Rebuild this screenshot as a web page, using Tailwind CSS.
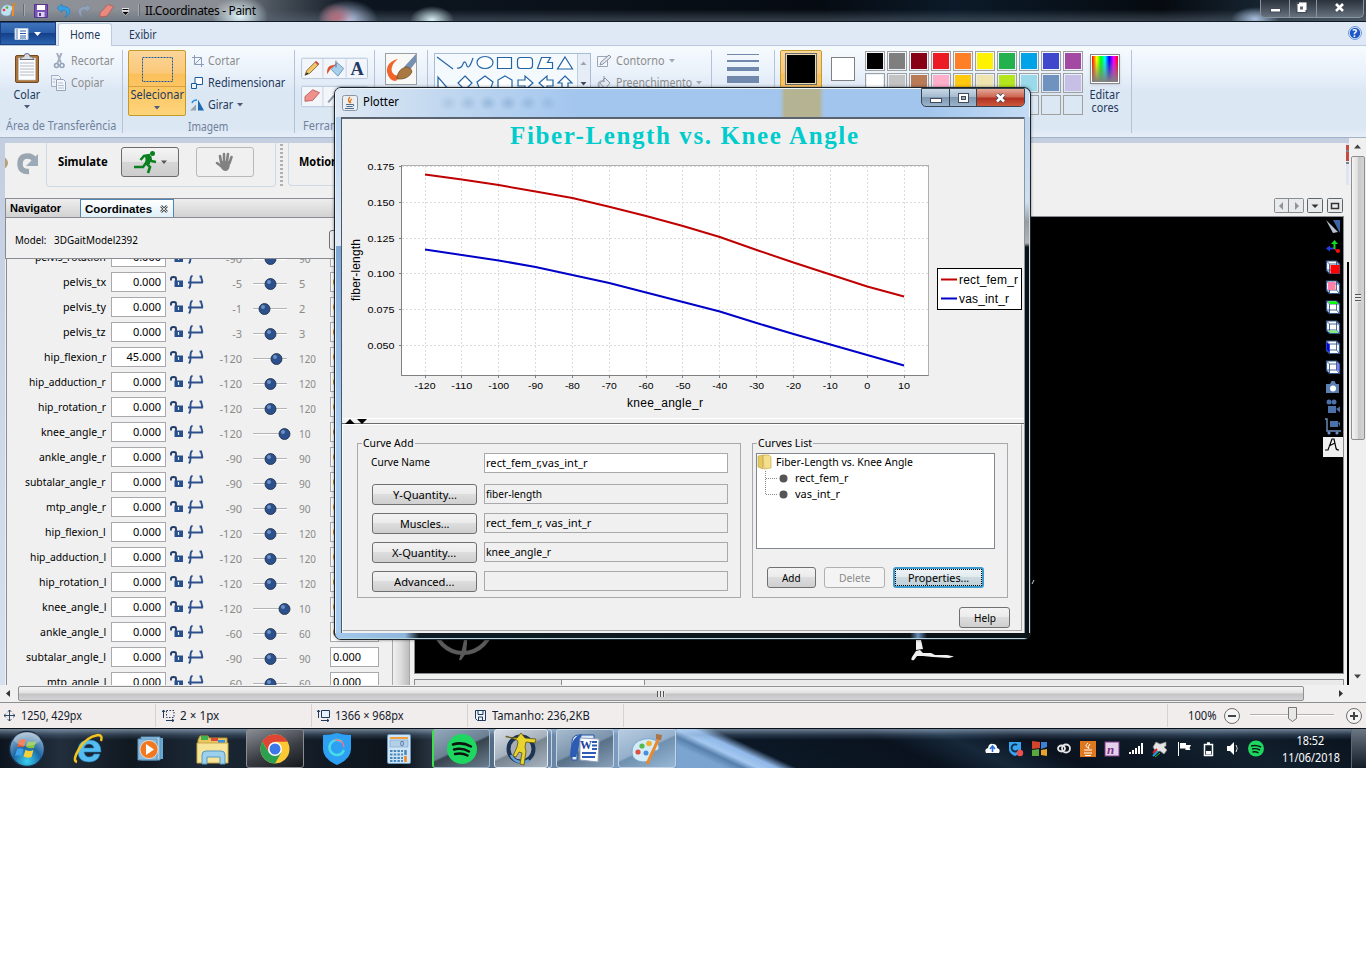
<!DOCTYPE html>
<html lang="pt">
<head>
<meta charset="utf-8">
<title>II.Coordinates - Paint</title>
<script src="https://cdn.jsdelivr.net/npm/@tailwindcss/browser@4"></script>
</head>
<body class="bg-white overflow-hidden font-['Noto_Sans','Open_Sans',sans-serif] text-[11px] leading-[14px] text-black">
<main class="relative w-[1366px] h-[968px] flex flex-col bg-white whitespace-nowrap overflow-hidden">

<!-- Title bar -->
<header class="h-[22px] shrink-0 flex items-start border-b border-[#101820] bg-[radial-gradient(ellipse_28px_20px_at_240px_16px,#dff3f8,transparent),radial-gradient(ellipse_18px_14px_at_336px_17px,#b46a78,transparent),radial-gradient(ellipse_30px_20px_at_348px_20px,#b8c8e8,transparent),radial-gradient(ellipse_22px_14px_at_432px_20px,#d8f0f4,transparent),radial-gradient(ellipse_24px_12px_at_1255px_19px,#a8c0dc,transparent),linear-gradient(180deg,transparent_45%,rgba(90,104,118,.5)_95%),linear-gradient(90deg,#8f9298_0%,#8a8d93_16%,#4a525c_20%,#0d1620_26%,#060b12_60%,#0b1a28_70%,#060a10_85%,#1a2a38_94%,#3a4450_100%)]">
  <svg class="w-[430px] h-[21px]" viewBox="0 0 430 21">
    <g><path d="M1 10q2-6 8-5q5 1 4 5q-2 0-2 2q0 4-4 4q-7 0-6-6z" fill="#bfe2f2" stroke="#6e9fbe" stroke-width=".6"/><circle cx="4" cy="10" r="1.3" fill="#e84030"/><circle cx="7" cy="7.500" r="1.300" fill="#5fae3a"/><path d="M13 4v12" stroke="#f08a28" stroke-width="2"/><path d="M12 3h4v3h-4z" fill="#b98b4c"/></g>
    <path d="M23.500 4v12M139.500 4v12" stroke="#686c74"/><path d="M138.500 4v12M24.500 4v12" stroke="#b8bcc4" stroke-width=".6"/>
    <path d="M34.500 4.500h13v13h-13z" fill="#7a55b8" stroke="#54348c"/><path d="M37 5h8v5h-8z" fill="#fff"/><path d="M37.500 12h7v5h-7z" fill="#dcd4ec"/><path d="M39 13h2v3h-2z" fill="#54348c"/>
    <path d="M57 8l5-4v2.500q8-.5 8 5q0 3.500-5 6q2.500-4 1.500-6t-4.500-1.500v2.500z" fill="#38a0e4" stroke="#1c78bc" stroke-width=".6"/>
    <path d="M91 8l-5-4v2.500q-8-.5-8 5q0 3.500 5 6q-2.500-4-1.500-6t4.500-1.500v2.500z" fill="#92a0b4" stroke="#7686a0" stroke-width=".6"/>
    <path d="M100 13l8-8.500l5.500 2l-6.500 9.500l-7 1z" fill="#e88a80" stroke="#b85048" stroke-width=".7"/>
    <path d="M122 9.500h7" stroke="#fff" stroke-width="2.500"/><path d="M121.500 11.500h8l-4 4z" fill="#fff"/><path d="M122.500 9.500h6" stroke="#000"/><path d="M122.500 12h6l-3 3z" fill="#000"/>
    <text x="145" y="15" font-size="12" textLength="111" lengthAdjust="spacing">II.Coordinates - Paint</text>
  </svg>
  <div class="ml-auto mr-[2px] w-[104px] h-[18px] border border-t-0 border-[#8a949e] rounded-b-[5px] bg-linear-to-b from-[#2a323c] to-[#66727e] flex">
    <svg viewBox="0 0 101 17" class="w-[101px] h-[17px]"><path d="M28.500 0v17M55.500 0v17" stroke="#8a949e"/><rect x="9.500" y="8.500" width="10" height="3.500" fill="#fff" stroke="#444a58"/><path d="M36.500 3.500h8v8h-8z" fill="none" stroke="#444a58" stroke-width="3"/><path d="M38 2.500h7.500v7.500h-1v2h-8v-8h1.500z" fill="#fff"/><path d="M39 6.500h3v3h-3z" fill="#667"/><path d="M75 4l7 7M82 4l-7 7" stroke="#444a58" stroke-width="4.500"/><path d="M75 4l7 7M82 4l-7 7" stroke="#fff" stroke-width="2.600"/></svg>
  </div>
</header>

<!-- Ribbon tabs -->
<nav class="h-[24px] shrink-0 bg-[#dfe9f5] border-b border-[#b9c8da] flex text-[#1e395b] text-[12px]">
  <div class="w-[56px] h-[23px] border border-[#1b3f7c] bg-[linear-gradient(180deg,#3f74bc,#2a5ca8_48%,#16408a_50%,#2a64b0)] flex items-center justify-center">
    <svg viewBox="0 0 30 14" class="w-[30px] h-[14px]"><path d="M2 1.500h13v11h-13z" fill="#fff" stroke="#b8cce8"/><path d="M7 4h6M7 6.500h6M7 9h6M7 11h6" stroke="#2a5ca8"/><path d="M4 2v10" stroke="#a8bcd8" stroke-width="2"/><path d="M21 5h7l-3.500 4z" fill="#fff"/></svg>
  </div>
  <div class="ml-[2px] mt-px w-[54px] h-[23px] bg-[#f8fbfe] border border-b-0 border-[#bccbdd] rounded-t-[3px] text-center leading-[22px]"><span data-w="30">Home</span></div>
  <div class="ml-[17px] leading-[25px]"><span data-w="28">Exibir</span></div>
  <svg viewBox="0 0 14 14" class="ml-auto mr-[4px] mt-[4px] w-[14px] h-[14px]"><circle cx="7" cy="7" r="6.500" fill="#dfe9f5" stroke="#6d9ad8"/><circle cx="7" cy="7" r="5.200" fill="#1e56c8"/><text x="4.300" y="10.800" font-size="10" font-weight="bold" fill="#fff">?</text></svg>
</nav>

<!-- Ribbon -->
<section class="h-[92px] shrink-0 flex bg-[linear-gradient(180deg,#f7fbfe,#e9f1fa_30%,#dce7f4_50%,#dce7f4_90%,#e6eef8)] border-b border-[#a3b2c6] text-[#1e395b] text-[12px]">
  <div class="w-[123px] pt-[6px] flex flex-col border-r border-[#b4c3d8] my-[4px]">
    <div class="flex h-[67px] -mt-[6px]">
      <div class="w-[53px] flex flex-col items-center">
        <svg viewBox="0 0 28 34" class="w-[28px] h-[34px]"><rect x="2.500" y="5.500" width="23" height="27" rx="1.500" fill="#a8743c" stroke="#74481c"/><path d="M5.500 8h17v22h-17z" fill="#fbfcfe" stroke="#c8c8c8" stroke-width=".6"/><path d="M7 13h14M7 16h14M7 19h14M7 22h14M7 25h14" stroke="#b4bac4"/><path d="M7 9.500q1-3 4-3q0-3 3-3t3 3q3 0 4 3z" fill="#d8dce0" stroke="#6a6e74"/></svg>
        <span class="mt-[4px]" data-w="27">Colar</span>
        <svg viewBox="0 0 6 4" class="w-[6px] h-[4px] mt-[3px]"><path d="M0 0h6l-3 3.500z" fill="#4a5a78"/></svg>
      </div>
      <div class="flex flex-col text-[#8d8d8d]">
        <div class="flex h-[22px] items-center gap-[4px]"><svg viewBox="0 0 14 16" class="w-[14px] h-[16px]"><path d="M4 0l4 10M8.500 0l-4 10" stroke="#a4aec0" stroke-width="2" fill="none"/><circle cx="3.500" cy="12.500" r="2" fill="none" stroke="#94a0b6" stroke-width="1.600"/><circle cx="9" cy="12.500" r="2" fill="none" stroke="#94a0b6" stroke-width="1.600"/></svg><span data-w="43">Recortar</span></div>
        <div class="flex h-[22px] items-center gap-[4px] -ml-[2px]"><svg viewBox="0 0 16 16" class="w-[16px] h-[16px]"><path d="M.5.5h7l2 2v9h-9z" fill="#eef2f8" stroke="#a0aec4"/><path d="M5.500 4.500h7l2 2v9h-9z" fill="#f4f7fb" stroke="#94a2ba"/><path d="M7 8h5M7 10.500h6M7 13h6M2 4h3M2 7h2" stroke="#b0bccf"/></svg><span data-w="33">Copiar</span></div>
      </div>
    </div>
    <div class="pl-[6px] text-[#70819c] mt-[5px]"><span data-w="110">Área de Transferência</span></div>
  </div>
  <div class="w-[172px] flex flex-col border-r border-[#b4c3d8] my-[4px]">
    <div class="flex h-[67px]">
      <div class="ml-[5px] w-[58px] h-[66px] border border-[#c29b29] rounded-[2px] bg-[linear-gradient(180deg,#fbd59a,#fbc878_35%,#fbbf5a_36%,#fcc765_60%,#fdd47a)] flex flex-col items-center">
        <svg viewBox="0 0 56 36" class="w-[56px] h-[36px] shrink-0"><rect x="13.500" y="6.500" width="30" height="24" fill="none" stroke="#1c5aa0" stroke-dasharray="2 1"/><path d="M0 35.500h56" stroke="#d8a040"/></svg>
        <span class="mt-[1px]" data-w="53">Selecionar</span>
        <svg viewBox="0 0 6 4" class="w-[6px] h-[4px] mt-[4px]"><path d="M0 0h6l-3 3.500z" fill="#4a5a78"/></svg>
      </div>
      <div class="ml-[5px] flex flex-col">
        <div class="flex h-[22px] items-center gap-[4px] text-[#8d8d8d]"><svg viewBox="0 0 12 12" class="w-[12px] h-[12px] ml-px"><path d="M2.500 0v9.500h9.500M0 2.500h9.500v9.500M2.500 9.500l7-7" fill="none" stroke="#8c9cb8"/></svg><span data-w="32">Cortar</span></div>
        <div class="flex h-[22px] items-center gap-[5px]"><svg viewBox="0 0 12 12" class="w-[12px] h-[12px]"><path d="M4 .5h7.500v7h-7.500z" fill="#fff" stroke="#1c5a98"/><path d="M.5 6.500h5v5h-5z" fill="#e8f4fc" stroke="#1c5a98"/></svg><span data-w="77">Redimensionar</span></div>
        <div class="flex h-[22px] items-center gap-[4px]"><svg viewBox="0 0 14 12" class="w-[14px] h-[12px] -ml-px"><path d="M0 11.500h6v-6z" fill="#98a4ac"/><path d="M8 11.500h6l-6-11z" fill="#1c6cb4"/><path d="M2 4q1-3 5-3" stroke="#2a8ad8" fill="none" stroke-width="1.500"/></svg><span data-w="25">Girar</span><svg viewBox="0 0 6 4" class="w-[6px] h-[4px]"><path d="M0 0h6l-3 3.500z" fill="#4a5a78"/></svg></div>
      </div>
    </div>
    <div class="pl-[65px] text-[#70819c] mt-[4px]"><span data-w="40">Imagem</span></div>
  </div>
  <div class="w-[80px] flex flex-col border-r border-[#b4c3d8] my-[4px] pl-[5px]">
    <svg viewBox="300 50 70 64" class="w-[70px] h-[64px]"><g fill="#f2f6fb" stroke="#b4c4da"><rect x="300.500" y="58.500" width="68" height="21" rx="1"/><rect x="300.500" y="87.500" width="68" height="21" rx="1"/></g><path d="M322.500 59v20M346.500 59v20M322.500 88v20" stroke="#c8d4e4"/><path d="M304 76l2-5l9-9l3 3l-9 9z" fill="#f4c860" stroke="#6a5030" stroke-width=".8"/><path d="M315 62l3 3" stroke="#c84c4c" stroke-width="2"/><path d="M304 76l2-3l1.500 1.500z" fill="#222"/><path d="M331 70l6-7l7 6l-6 8z" fill="#a8d0ec" stroke="#5a88b0" stroke-width=".8"/><path d="M327 75q-1-8 4-9l5-1l-4 3q-2 1-5 7z" fill="#e04c28"/><path d="M336 61v7" stroke="#667"/><text x="351" y="76" font-size="19" font-weight="bold" font-family="Liberation Serif,serif" fill="#1e3a66">A</text><path d="M304 98l8-7l7 3l-7 8l-8 1z" fill="#f0908a" stroke="#b05048" stroke-width=".8"/><path d="M328 104l6-7" stroke="#8898a8" stroke-width="2"/></svg>
    <div class="text-[#70819c] pl-[3px] mt-[7px]"><span data-w="66">Ferramentas</span></div>
  </div>
  <div class="w-[53px] border-r border-[#b4c3d8] my-[4px] pl-[10px]">
    <svg viewBox="0 0 32 38" class="w-[32px] h-[38px] mt-[2px]"><rect x=".5" y="1.500" width="31" height="31" fill="#f8f8f6" stroke="#98a0a8"/><path d="M13 7q-12 3-11 13q2 9 9 9l4-6q-5 2-8-3q-2-7 6-13z" fill="#f06428"/><path d="M31 2l-12 13l5 4l7-9z" fill="#7890b0"/><path d="M12 26q1-9 9-11q5 0 6 5q-4 8-15 7z" fill="#a87840" stroke="#6a4820" stroke-width=".7"/></svg>
  </div>
  <div class="w-[284px] border-r border-[#b4c3d8] my-[4px] pl-[6px] flex">
    <svg viewBox="434 52 157 64" class="w-[157px] h-[64px] mt-[2px]"><rect x="434.500" y="53.500" width="156" height="62" fill="#f4f9fd" stroke="#a8bcd6"/><path d="M577.500 54v62" stroke="#c0cede"/><path d="M578 54h12v62h-12z" fill="#e6edf6"/><path d="M580.500 65h6l-3-3.500z" fill="#98a4b4"/><path d="M580.500 82h6l-3 3.500z" fill="#3a4a68"/><g fill="#fff" stroke="#2464a4" stroke-width="1.200"><path d="M437 57l16 12" fill="none"/><path d="M457 68q4 1 6-4t4 2q2 4 6-8" fill="none"/><ellipse cx="485" cy="62.500" rx="8" ry="6"/><path d="M497.500 57.500h14v11h-14z"/><rect x="517.500" y="57.500" width="15" height="11" rx="3"/><path d="M541.500 57.500h9l-3 5h5v6h-15z"/><path d="M565 57l7.500 12h-15z"/><path d="M438 77v14h12z"/><path d="M485 76l7 7l-7 7l-7-7z" transform="translate(-20 0)"/><path d="M485 76l8 6l-3 8h-10l-3-8z"/><path d="M505 76l7 4v9h-14v-9z"/><path d="M518 80h7v-4l8 7l-8 7v-4h-7z"/><path d="M553 80h-6v-4l-8 7l8 7v-4h6z"/><path d="M565 76l7 7h-4v8h-6v-8h-4z"/></g></svg>
    <div class="ml-[6px] flex flex-col text-[#8d8d8d]">
      <div class="flex h-[22px] items-center gap-[4px]"><svg viewBox="0 0 15 14" class="w-[15px] h-[14px]"><path d="M.5 2.500h10v10h-10z" fill="#f4f6fa" stroke="#9aa6b8"/><path d="M3 11l1-3l8-7l2 2l-8 7z" fill="#e4e8ee" stroke="#8a94a6"/></svg><span data-w="49">Contorno</span><svg viewBox="0 0 6 4" class="w-[6px] h-[4px]"><path d="M0 0h6l-3 3.500z" fill="#a0a8b4"/></svg></div>
      <div class="flex h-[22px] items-center gap-[4px]"><svg viewBox="0 0 15 14" class="w-[15px] h-[14px]"><path d="M3 7l5-5l5 5l-5 6z" fill="#e4e8ee" stroke="#8a94a6"/><path d="M2 11q-2-6 5-6" fill="none" stroke="#a8b0be" stroke-width="2"/><path d="M7 0v6" stroke="#8a94a6"/></svg><span data-w="76">Preenchimento</span><svg viewBox="0 0 6 4" class="w-[6px] h-[4px]"><path d="M0 0h6l-3 3.500z" fill="#a0a8b4"/></svg></div>
    </div>
  </div>
  <div class="w-[63px] border-r border-[#b4c3d8] my-[4px] pl-[15px]">
    <div class="w-[32px] flex flex-col gap-[5px] pt-[4px]"><div class="h-px bg-[#7088ac]"></div><div class="h-[2px] bg-[#7088ac]"></div><div class="h-[4px] bg-[#7088ac]"></div><div class="h-[7px] bg-[#7088ac]"></div></div>
  </div>
  <div class="w-[357px] border-r border-[#b4c3d8] my-[4px] flex pl-[5px]">
    <div class="w-[42px] h-[66px] border border-[#c29b29] rounded-[2px] bg-[linear-gradient(180deg,#fbd59a,#fbc878_35%,#fbbf5a_36%,#fdd47a)] flex justify-center pt-[2px]"><div class="w-[32px] h-[32px] border border-[#6a6a6a] bg-[#e8d8b0] p-px"><div class="bg-black size-full"></div></div></div>
    <div class="ml-[9px] mt-[7px] w-[24px] h-[24px] border border-[#808080] bg-white"></div>
    <div id="palette" class="ml-[10px] mt-[1px] grid grid-cols-[repeat(10,20px)] gap-[2px] content-start"></div>
    <div class="ml-[5px] flex flex-col items-center w-[34px] text-center">
      <div class="mt-[4px] w-[30px] h-[30px] border border-[#888] bg-white p-[1px] shadow"><div class="size-full bg-[linear-gradient(0deg,#808080,transparent_85%),linear-gradient(90deg,#f00,#ff0_18%,#0f0_34%,#0ff_50%,#00f_66%,#f0f_84%,#f00)]"></div></div>
      <span class="mt-[4px] leading-[13px]" data-w="30">Editar</span><span class="leading-[13px]" data-w="27">cores</span>
    </div>
  </div>
</section>

<!-- Canvas area -->
<section class="h-[547px] shrink-0 flex">
  <div class="w-[1349px] flex bg-[linear-gradient(180deg,#c3cfe1,#d6e0ef)]">
    <div class="mt-[5px] ml-[5px] w-[1344px] bg-[#f0f0f0] flex flex-col overflow-hidden">
      <!-- Simulate toolbar -->
      <div class="h-[55px] shrink-0 flex">
        <svg viewBox="5 143 41 55" class="w-[41px] h-[55px]"><circle cx="2" cy="163" r="6" fill="#b8a078"/><path d="M29 171.500q-9 .5-9-7.500q0-8 7.500-8q5 0 7 4" fill="none" stroke="#9aa6b2" stroke-width="5.500"/><path d="M38 154v12h-12z" fill="#9aaab8"/></svg>
        <div class="w-[230px] h-[44px] border border-t-0 border-[#cdd9e4] rounded-b-[4px] flex items-start pl-[11px] font-bold">
          <span class="mt-[12px] text-[11.5px]" data-w="50">Simulate</span>
          <div class="ml-[13px] mt-[4px] w-[58px] h-[30px] border border-[#6c6c6c] rounded-[3px] bg-[linear-gradient(180deg,#f4f4f4,#e8e8e8_48%,#d6d6d6_50%,#cdcdcd)] flex items-center justify-center">
            <svg viewBox="0 0 36 24" class="w-[36px] h-[24px]"><circle cx="20.500" cy="3.500" r="2.500" fill="#0a8020"/><path d="M18 5l-6 1l-3.500 4M17 6l-3 7l4 4l-2 6M14 13l-3 4h-9M18 6l1 5l5 1" fill="none" stroke="#0a8020" stroke-width="2.600"/><path d="M13 5l6 1l-1 8l-4 1z" fill="#0a8020"/><path d="M29 10.500h6l-3 3.500z" fill="#555"/></svg>
          </div>
          <div class="ml-[17px] mt-[4px] w-[58px] h-[30px] border border-[#b8b8b8] rounded-[3px] flex items-center justify-center"><svg viewBox="0 0 20 20" class="w-[20px] h-[20px]"><g stroke="#828282" stroke-width="2.600" stroke-linecap="round" fill="none"><path d="M6 10l-1-6M9 9v-7M12 9l1-7M14.500 11l2-6M6 14l-4-3"/></g><path d="M5 9h10.500l-1 6q-1 4-4 4t-5-4z" fill="#828282"/></svg></div>
        </div>
        <div class="ml-[4px] mt-[1px] h-[42px] w-[3px] bg-[repeating-linear-gradient(180deg,#b0b0b0_0_2px,transparent_2px_4px)]"></div>
        <div class="ml-[5px] w-[400px] h-[43px] border border-t-0 border-[#cdd9e4] rounded-b-[4px] pl-[10px] pt-[12px] font-bold text-[11.5px]"><span data-w="42">Motion:</span></div>
        <svg viewBox="0 0 3 42" class="ml-auto w-[3px] h-[42px]"><path d="M0 0h3v42h-3z" fill="#dce4f2"/><path d="M0 2h3v5h-3zM0 9h3v9h-3z" fill="#c44c40"/><path d="M0 8h3M0 20h3" stroke="#222"/></svg>
      </div>
      <div class="flex h-[487px] shrink-0">
        <!-- Coordinates panel -->
        <div class="w-[406px] flex flex-col">
          <div class="h-[20px] shrink-0 flex border-y border-[#8a8c94] border-l bg-[linear-gradient(180deg,#eee,#d2d2d2)] font-['Liberation_Sans',Arial,sans-serif] font-bold text-[11.5px] leading-[19px]">
            <div class="w-[74px] pl-[4px]"><span data-w="51">Navigator</span></div>
            <div class="w-[94px] pl-[4px] border border-b-0 border-[#4a86b8] bg-linear-to-b from-white to-[#e0f0f8] flex items-center leading-[18px]"><span data-w="67">Coordinates</span><svg viewBox="0 0 8 8" class="ml-[8px] w-[8px] h-[8px]"><path d="M1 1l6 6M7 1l-6 6" stroke="#555" stroke-width="2.600"/><path d="M1 1l6 6M7 1l-6 6" stroke="#fff" stroke-width=".8"/></svg></div>
          </div>
          <div class="h-[41px] shrink-0 border-l border-b border-[#8a8c94] flex items-center pl-[9px] pt-[4px]"><span data-w="31">Model:</span><span class="ml-[8px]" data-w="84">3DGaitModel2392</span><div class="ml-[191px] w-[30px] h-[20px] border border-[#707070] rounded-[3px]"></div></div>
          <div class="h-[426px] ml-px flex border-l border-[#8a8c94] overflow-hidden">
            <div id="rows" class="w-[385px] -mt-[14px]"></div>
            <div class="w-[18px] border-x border-[#a8a8a8] bg-[linear-gradient(90deg,#f0f0f0,#dcdcdc_50%,#bcbcbc)]"></div>
          </div>
        </div>
        <!-- 3D view -->
        <div class="ml-[3px] w-[930px] flex flex-col">
          <div class="h-[17px] shrink-0 flex justify-end">
            <svg viewBox="1274 197 70 17" class="w-[70px] h-[17px]"><g fill="#e8eaec" stroke="#5e666c"><rect x="1274.500" y="197.500" width="29" height="14" rx="1" stroke="#888c90"/><rect x="1307.500" y="197.500" width="15" height="14" rx="1"/><rect x="1327.500" y="197.500" width="15" height="14" rx="1"/></g><path d="M1288.500 198v14" stroke="#888c90"/><path d="M1283 201v8l-4-4zM1295 201v8l4-4z" fill="#909498"/><path d="M1311.500 203.500h7l-3.500 3.500z" fill="#333"/><path d="M1331.500 202.500h7v5h-7z" fill="none" stroke="#333" stroke-width="1.500"/></svg>
          </div>
          <div class="h-[458px] shrink-0 bg-black border border-[#8a8c94] flex items-end mt-px">
            <svg viewBox="415 540 700 133" class="w-[700px] h-[133px]"><circle cx="463" cy="624" r="29" fill="none" stroke="#5a5a5a" stroke-width="4"/><path d="M467 625q-2 20-7 35l5-7q2-18 2-28z" fill="#5a5a5a" stroke="#5a5a5a" stroke-width="2"/><path d="M916 640h5l2 9l-7 1z" fill="#f2f2f2"/><path d="M912 657l4-6l4-1l3 3l8 0l4 2h12l7 1.500l-5 1.500l-16-1l-10-1l-6 0l-3 4q-4 1-2-3z" fill="#f0f0f0"/><path d="M1032 584l2-4" stroke="#ddd"/></svg>
            <svg id="tools" viewBox="1323 217 20 456" class="ml-auto w-[20px] h-[456px]"></svg>
          </div>
          <div class="mt-[5px] h-[8px] border border-b-0 border-[#8a8c94] flex"><div class="w-[147px] border-r border-[#8a8c94] bg-[#eaeaea]"></div><div class="w-[83px] border-r border-[#8a8c94] bg-[#f6f6f6]"></div><div class="grow bg-[#eaeaea]"></div></div>
        </div>
        <div class="ml-auto mt-[64px] w-[2px] bg-black h-[423px]"></div>
      </div>
    </div>
  </div>
  <!-- Vertical scrollbar -->
  <div class="w-[17px] bg-[#f0f0f0] flex flex-col items-center">
    <svg viewBox="0 0 17 18" class="w-[17px] h-[18px] shrink-0"><path d="M5 10.500h7l-3.500-4z" fill="#444"/></svg>
    <div class="w-[14px] h-[284px] border border-[#8e8e8e] rounded-[2px] bg-[linear-gradient(90deg,#f4f4f4,#e0e0e0_45%,#c8c8ca_55%,#d4d4d6)] flex items-center justify-center"><div class="w-[6px] h-[8px] bg-[repeating-linear-gradient(180deg,#555_0_1px,#e8e8e8_1px_3px)]"></div></div>
    <svg viewBox="0 0 17 18" class="mt-auto w-[17px] h-[18px] shrink-0"><path d="M5 7.500h7l-3.500 4z" fill="#444"/></svg>
  </div>
</section>

<!-- Horizontal scrollbar -->
<div class="h-[17px] shrink-0 bg-[#f0f0f0] flex items-center">
  <svg viewBox="0 0 18 17" class="w-[18px] h-[17px]"><path d="M10 5v7l-4-3.500z" fill="#333"/></svg>
  <div class="w-[1286px] h-[15px] border border-[#909090] rounded-[2px] bg-[linear-gradient(180deg,#f4f4f4,#e2e2e2_45%,#c4c4c6_55%,#d4d4d6)] flex items-center justify-center"><div class="w-[8px] h-[6px] bg-[repeating-linear-gradient(90deg,#555_0_1px,#e8e8e8_1px_3px)]"></div></div>
  <svg viewBox="0 0 18 17" class="ml-auto mr-[17px] w-[18px] h-[17px]"><path d="M8 5v7l4-3.500z" fill="#333"/></svg>
</div>

<!-- Status bar -->
<footer class="h-[26px] shrink-0 bg-[#f1edec] border-t border-[#8f8f8f] flex items-center text-[12px] leading-[16px] text-[#151c2c]">
  <div class="w-[156px] h-[23px] border-r border-[#d6d2d2] flex items-center"><svg viewBox="0 0 12 12" class="ml-[4px] w-[11px] h-[11px]"><path d="M6 0v12M0 6h12M4 2l2-2l2 2M4 10l2 2l2-2M2 4l-2 2l2 2M10 4l2 2l-2 2" fill="none" stroke="#1e395b"/></svg><span class="ml-[6px]" data-w="61">1250, 429px</span></div>
  <div class="w-[156px] h-[23px] border-r border-[#d6d2d2] flex items-center"><svg viewBox="0 0 13 13" class="ml-[6px] w-[13px] h-[13px]"><path d="M1.500 9v-8M0 3l1.500-2l1.500 2M4 11.500h8M10 10l2 1.500l-2 1.500" fill="none" stroke="#1e395b"/><path d="M4.500 1.500h7.500v7h-7.500z" fill="none" stroke="#1e395b" stroke-dasharray="1.500 1.500"/></svg><span class="ml-[5px]" data-w="39">2 × 1px</span></div>
  <div class="w-[156px] h-[23px] border-r border-[#d6d2d2] flex items-center"><svg viewBox="0 0 13 13" class="ml-[5px] w-[13px] h-[13px]"><path d="M1.500 9v-8M0 3l1.500-2l1.500 2M4 11.500h8M10 10l2 1.500l-2 1.500" fill="none" stroke="#1e395b"/><path d="M4.500 1.500h8v7h-8z" fill="#e6f0fa" stroke="#1e395b"/></svg><span class="ml-[5px]" data-w="69">1366 × 968px</span></div>
  <div class="w-[156px] h-[23px] border-r border-[#d6d2d2] flex items-center"><svg viewBox="0 0 11 11" class="ml-[7px] w-[11px] h-[11px]"><path d="M.5.5h10v10h-8l-2-2z" fill="#eef4fa" stroke="#1e395b"/><path d="M3 .5v4h5v-4M3.500 10v-3h4v3" fill="none" stroke="#1e395b"/></svg><span class="ml-[6px]" data-w="98">Tamanho: 236,2KB</span></div>
  <div class="ml-auto h-[23px] border-l border-[#d6d2d2] w-[199px] flex items-center pl-[20px]"><span data-w="29">100%</span>
    <svg viewBox="1220 704 146 24" class="ml-[3px] w-[146px] h-[24px] shrink-0"><g fill="#f4f4f4" stroke="#707070"><circle cx="1232" cy="716" r="7.500"/><circle cx="1354" cy="716" r="7.500"/></g><path d="M1228 716h8M1350 716h8M1354 712v8" stroke="#444" stroke-width="2"/><path d="M1250 714.500h84" stroke="#b0b0b0"/><path d="M1250 715.500h84" stroke="#fff"/><path d="M1288.500 707.500h8v11l-4 3l-4-3z" fill="#e8e8e8" stroke="#777"/></svg></div>
</footer>

<!-- Taskbar -->
<div class="h-[40px] shrink-0 flex border-t border-[#0a1018] bg-[linear-gradient(180deg,rgba(190,215,240,.55)_0,rgba(120,150,185,.25)_6px,transparent_11px),linear-gradient(90deg,#0c141e_0,#222e3c_60px,#101820_130px,#1c2836_200px,#0c131b_400px,#26323e_430px,#5a7490_500px,#7c9cc0_620px,#6c94c4_676px,transparent_677px),linear-gradient(25deg,#7ca4d0_50%,#5880ac_51.3%,#a4c8f0_52.3%,#90b8e8_53.6%,#0c1826_55%,#0a121e_65%,#16283a_70%,#0a121e_75%,#12202e_88%,#08101a)]">
  <div class="w-[60px] flex items-center pl-[8px]"><svg viewBox="0 0 38 38" class="w-[38px] h-[38px]"><defs><radialGradient id="orb" cx=".5" cy=".85" r=".8"><stop offset="0" stop-color="#38d0f0"/><stop offset=".5" stop-color="#1c68a4"/><stop offset="1" stop-color="#98b4cc"/></radialGradient></defs><circle cx="19" cy="19" r="17.500" fill="url(#orb)" stroke="#1a2c44" stroke-width="1.500"/><path d="M11 10q4-2 7 0l-2 7q-3-1-7 0z" fill="#e86030"/><path d="M20 11q4 2 8 0l-2 7q-4 1-8-1z" fill="#88c440"/><path d="M9 19q3-1.500 6.500 0l-2 7q-3-1.500-6.500 0z" fill="#40a0e8"/><path d="M17.500 20q4 2 8 0l-2 7q-4 1.500-8-.5z" fill="#f8d038"/><ellipse cx="19" cy="9" rx="13" ry="7" fill="#fff" opacity=".25"/></svg></div>
  <div class="flex gap-[4px]">
    <div class="w-[58px] flex items-center justify-center"><svg viewBox="0 0 32 32" class="w-[32px] h-[32px]"><path d="M28 19h-17q1 5 5 5q4 0 5-3h6q-2 8-11 8q-11 0-11-11q0-11 11-11q12 0 12 12zm-7-4q-1-4-5-4t-5 4z" fill="#54bcf0" stroke="#2480c0" stroke-width=".6"/><path d="M4 29q-5-1 2-13t19-14q5 0 3 6" fill="none" stroke="#f4c41c" stroke-width="2.500"/></svg></div>
    <div class="w-[58px] flex items-center justify-center"><svg viewBox="0 0 28 28" class="w-[28px] h-[28px]"><path d="M8 3h18v21h-18z" fill="#68a8d4"/><path d="M4 2h19v23h-19z" fill="#a8d0ec" stroke="#5890b8"/><path d="M1 4h19v21h-19z" fill="#8cbce0" stroke="#5890b8"/><circle cx="12" cy="14.500" r="9" fill="#f07820" stroke="#fff" stroke-width=".6"/><path d="M9 9l8 5.500l-8 5.500z" fill="#fff"/></svg></div>
    <div class="w-[58px] flex items-center justify-center"><svg viewBox="0 0 34 32" class="w-[34px] h-[32px]"><path d="M2 7l2-4h8l1 2h18v24h-29z" fill="#e8c860" stroke="#b89430"/><path d="M5 3h7v4h-7z" fill="#40b050"/><path d="M15 5h7v3h-7z" fill="#e04838"/><path d="M22 7h7v3h-7z" fill="#3890e0"/><path d="M1 10h31v20h-31z" fill="#f6e498" stroke="#c8a848"/><path d="M6 31v-9q0-4 4-4h15q4 0 4 4v9h-5v-7h-13v7z" fill="#9cd0ec" stroke="#5898c0"/></svg></div>
    <div class="w-[58px] border border-[#8a8e94] rounded-[3px] bg-[linear-gradient(160deg,#8a8e94,#3c4046_55%,#14181c)] flex items-center justify-center"><svg viewBox="-16 -16 32 32" class="w-[32px] h-[32px]"><circle r="14.500" fill="#fcc934"/><path d="M-12.600-7.200A14.500 14.500 0 0 1 12.600-7.200H0L-6 3.500z" fill="#e04434"/><path d="M-12.600-7.200A14.500 14.500 0 0 0 0 14.500L6.300 3.600L0 7L-6.200 3.500z" fill="#2ca050"/><circle r="7" fill="#fff"/><circle r="5.500" fill="#3c78e8"/></svg></div>
    <div class="w-[58px] flex items-center justify-center"><svg viewBox="0 0 30 34" class="w-[30px] h-[34px]"><path d="M1 3q8 0 14-2q6 2 14 2v14q0 10-14 16q-14-6-14-16z" fill="#2ea0f4"/><path d="M20 10a7.500 7.500 0 1 0 2 8" fill="none" stroke="#48dce4" stroke-width="2.500"/><path d="M13 8q8-1 9 7" fill="none" stroke="#ff7088" stroke-width="1.500"/></svg></div>
    <div class="w-[58px] flex items-center justify-center"><svg viewBox="0 0 24 30" class="w-[24px] h-[30px]"><rect x=".5" y=".5" width="23" height="29" rx="1.500" fill="#cfe4f4" stroke="#6898c0"/><path d="M3 3h18v2h-18z" fill="#f0a040"/><path d="M3 6h18v7h-18z" fill="#b4d0e8" stroke="#6898c0" stroke-width=".5"/><text x="13" y="12" font-size="7" fill="#2a5080">0</text><path d="M3 17h13M3 20.500h13M3 24h13M3 27h13" stroke="#4a88bc" stroke-width="2" stroke-dasharray="2.500 1.200"/><path d="M18.500 16v5" stroke="#4a88bc" stroke-width="2.500"/><path d="M18.500 22v6" stroke="#f08820" stroke-width="2.500"/></svg></div>
    <div class="w-[58px] border border-[#a4b4c4] border-l-2 border-l-[#3ce048] rounded-[3px] bg-[linear-gradient(155deg,#94a8bc,#6c8094_48%,#38444e_52%,#6a7e90)] flex items-center justify-center"><svg viewBox="0 0 30 30" class="w-[30px] h-[30px]"><circle cx="15" cy="15" r="15" fill="#1ed760"/><path d="M6 10.500q9-3 18 2M7 15.500q8-2 15 2M8 20q7-1.500 12.500 1.500" fill="none" stroke="#0c1410" stroke-width="2.500" stroke-linecap="round"/></svg></div>
    <div class="w-[58px] flex"><div class="w-[54px] border border-[#e4ecf4] rounded-[3px] bg-[linear-gradient(155deg,#d8dee6,#a4b0bc_48%,#78848e_52%,#a8b4c0)] flex items-center justify-center"><svg viewBox="0 0 32 34" class="w-[32px] h-[34px]"><circle cx="16" cy="17" r="12.500" fill="#a8aeb4" stroke="#1c3454" stroke-width="4"/><path d="M6 23a12 12 0 0 0 18 5" stroke="#64a0dc" stroke-width="2.500" fill="none"/><path d="M1 5l11 1l4-5l4 5l11 1l-1 4l-9-1l-1 5l1 4l-2 14l-4-1l2-11l-3-1l-3 5l-3-1l4-9l1-5l-1-2l-11-4z" fill="#e8d42c" stroke="#5a5010" stroke-width=".8"/></svg></div><div class="w-[4px] border border-l-0 border-[#c8d4e0] rounded-r-[3px]"></div></div>
    <div class="w-[58px] border border-[#c4d4e4] rounded-[3px] bg-[linear-gradient(155deg,#a8bccf,#7c94ac_48%,#587088_52%,#88a0b8)] flex items-center justify-center"><svg viewBox="0 0 32 32" class="w-[32px] h-[32px]"><path d="M3 27v-18q0-7 7-7h15v4h-13q-4 0-4 4v17z" fill="#dce8f8" stroke="#2454a4"/><path d="M1 24q0-20 12-23l-6 23z" fill="#2c5cb4"/><path d="M11 5l19 1l-1 23l-18-2z" fill="#fff" stroke="#90a4bc"/><text x="11" y="16" font-size="12" font-weight="bold" font-family="Liberation Serif,serif" fill="#1c449c">W</text><path d="M23 9h5M23 12.500h5M23 16h5M13 20h14M13 24h13" stroke="#2c5cb4" stroke-width="1.800"/></svg></div>
    <div class="w-[58px] border border-[#c4d4e4] rounded-[3px] bg-[linear-gradient(155deg,#b8cce0,#94b0cc_48%,#7090b0_52%,#98b8d8)] flex items-center justify-center"><svg viewBox="0 0 34 32" class="w-[34px] h-[32px]"><path d="M2 20q-1-11 12-14q14-2 15 8q0 4-5 4q-4 1-3 5q0 6-8 6q-10-1-11-9z" fill="#d4ecf8" stroke="#78a8cc"/><circle cx="8" cy="19" r="2.600" fill="#e05040"/><circle cx="12" cy="13" r="2.600" fill="#58b848"/><circle cx="19" cy="10.500" r="2.800" fill="#f0b030"/><circle cx="16" cy="20" r="2.500" fill="#4890d8"/><path d="M29 5l-12 26" stroke="#e88830" stroke-width="3"/><path d="M26 1l6 1l-1 5l-5-1z" fill="#a87448"/></svg></div>
  </div>
  <div class="ml-auto flex text-white">
    <svg viewBox="980 729 290 38" class="w-[290px] h-[38px]"><path d="M986 753q-2-4 2-5q1-5 5-4q4 0 4 4q4 1 2 5z" fill="#fff"/><path d="M992.500 752v-5M990 749l2.500-3l2.500 3" stroke="#2870e0" stroke-width="1.600" fill="none"/><path d="M1009 742h12v8q-1 4-6 6q-5-2-6-6z" fill="#38a4f0"/><path d="M1017 745a3.500 3.500 0 1 0 1 5" stroke="#0a3050" stroke-width="2" fill="none"/><circle cx="1020" cy="753" r="3.200" fill="#f05050"/><path d="M1032 741l8 1v6l-8 1z" fill="#d4442c"/><path d="M1041 742h6v5l-6 2z" fill="#3c80d8"/><path d="M1032 750l7-1v7h-7z" fill="#58a83c"/><path d="M1041 750l6-1v7l-6-1z" fill="#e8a428"/><g fill="none" stroke="#e8e8e8" stroke-width="1.800"><ellipse cx="1061.500" cy="748.500" rx="3.500" ry="3"/><ellipse cx="1066" cy="748.500" rx="4" ry="4"/></g><rect x="1080" y="741" width="16" height="16" fill="#e07820"/><path d="M1088 743q-4 3 0 5M1090 744q-3 3-1 5M1084 750h8M1084 753h8M1085 755.500h6" stroke="#fff" fill="none"/><rect x="1105" y="742" width="14" height="14" fill="#e4d0e8" stroke="#80408c"/><text x="1107" y="754" font-size="13" font-style="italic" font-weight="bold" font-family="Liberation Serif,serif" fill="#80308c">n</text><path d="M1130 754v-2M1133 754v-4M1136 754v-6M1139 754v-8M1142 754v-11" stroke="#fff" stroke-width="2"/><path d="M1153 747l3-5l4 2l6-2v4l-2 1l3 3l-3 4l-4-3l-4 1z" fill="#e4e4e4" stroke="#888" stroke-width=".7"/><path d="M1153 756l5-5" stroke="#20a0e0" stroke-width="2"/><path d="M1153 753l4-4" stroke="#e02020" stroke-width="2"/><path d="M1155 757l5-4" stroke="#30c030"/><path d="M1178.500 742v14" stroke="#fff"/><path d="M1180 743h6v2h5l-1.500 3l1 2h-5v-1.500h-5.500z" fill="#fff"/><path d="M1204.500 744.500h8v11h-8zM1207 743h3" fill="none" stroke="#fff" stroke-width="1.500"/><path d="M1206 751h5v3.500h-5z" fill="#fff"/><path d="M1227 746h3l4-4v13l-4-4h-3z" fill="#fff"/><path d="M1236 745q2.500 3 0 7" stroke="#ddd" fill="none"/><circle cx="1256" cy="748.500" r="8" fill="#1ed760"/><path d="M1251 746q5-1.500 10 1M1252 749q4-1 8 1M1252.500 752q3-.8 6 .8" stroke="#0c1810" stroke-width="1.400" fill="none"/></svg>
    <div class="w-[81px] flex flex-col items-center pt-[3px] text-[12px] leading-[17px]"><span data-w="28">18:52</span><span data-w="58">11/06/2018</span></div>
    <div class="w-[15px] border-l border-[#5a6672] bg-linear-to-b from-[#6c7884] to-[#141c26]"></div>
  </div>
</div>

<!-- Plotter window -->
<section class="absolute left-[334px] top-[87px] w-[697px] h-[553px] rounded-[7px] border border-[#1a232c] shadow-[0_0_3px_rgba(0,0,0,.5)] bg-[linear-gradient(90deg,#a4c8ee,#8fb6dc_70px,#101c24_84px,#0a1418_575px,#6890b8_583px,#0a1418_592px,#0a1418)] flex flex-col overflow-hidden">
  <div class="h-[29px] shrink-0 flex items-start bg-[linear-gradient(90deg,transparent_444px,rgba(184,176,130,.85)_449px,rgba(184,176,130,.85)_483px,transparent_488px),radial-gradient(ellipse_9px_8px_at_112px_14px,rgba(60,110,160,.15),transparent),radial-gradient(ellipse_9px_8px_at_132px_14px,rgba(60,110,160,.2),transparent),radial-gradient(ellipse_9px_8px_at_152px_14px,rgba(60,110,160,.25),transparent),radial-gradient(ellipse_9px_8px_at_172px_14px,rgba(60,110,160,.25),transparent),radial-gradient(ellipse_9px_8px_at_192px_14px,rgba(60,110,160,.2),transparent),radial-gradient(ellipse_9px_8px_at_212px_14px,rgba(60,110,160,.15),transparent),linear-gradient(90deg,#dfe9f4,#c2d8f0_15%,#a3c6ee_35%,#a2c5ed_85%,#c4dcf4)] border-t border-[#eef6fc] border-x">
    <svg viewBox="0 0 16 16" class="ml-[6px] mt-[6px] w-[16px] h-[16px]"><rect x=".5" y=".5" width="15" height="15" rx="2" fill="#eceff2" stroke="#8a96a2"/><path d="M8 2q-3 3 0 6M10 4q-3 2-1 4" stroke="#e87818" fill="none" stroke-width="1.300"/><path d="M4 9.500h7q2 0 0 2M4.500 11.500h6M3 13.500h9" stroke="#4a6c8c" fill="none"/></svg>
    <span class="ml-[5px] mt-[6px] text-[12px]" data-w="36">Plotter</span>
    <div class="ml-auto mr-[4px] -mt-px w-[104px] h-[19px] border border-[#39444f] rounded-b-[5px] bg-[linear-gradient(180deg,#c8d8e6,#a6bcd0_45%,#8098b0_50%,#9ab4ce)] flex overflow-hidden">
      <svg viewBox="0 0 102 18" class="w-[102px] h-[18px]"><defs><linearGradient id="cl" x2="0" y2="1"><stop offset="0" stop-color="#e4a898"/><stop offset=".45" stop-color="#cc6450"/><stop offset=".5" stop-color="#b03020"/><stop offset="1" stop-color="#d05c40"/></linearGradient></defs><path d="M55 0h47v18h-47z" fill="url(#cl)"/><path d="M27.500 0v18M54.500 0v18" stroke="#39444f"/><rect x="8.500" y="9.500" width="11" height="4" fill="#fff" stroke="#444a58"/><rect x="36.500" y="4.500" width="10" height="9" fill="#fff" stroke="#444a58"/><rect x="39.500" y="7.500" width="4" height="3" fill="#9ab" stroke="#444a58"/><path d="M75 5.500l7 7M82 5.500l-7 7" stroke="#4a4a58" stroke-width="4.500"/><path d="M75 5.500l7 7M82 5.500l-7 7" stroke="#fff" stroke-width="2.600"/></svg>
    </div>
  </div>
  <div class="grow flex">
    <div class="w-[7px] shrink-0 border-x border-x-[#e4f0fa] border-r-[#4a5868] bg-[linear-gradient(180deg,#b8d2ee,#dfeaf6_25%,#e2ecf6_125px,#7ea6d4_128px,#a8cbf0_60%,#a8cbf0)]"></div>
    <div class="w-[682px] h-[516px] bg-[#f0f0f0] border-t-2 border-[#5a6470] flex flex-col">
      <svg viewBox="342 119 681 299" class="w-[681px] h-[299px] shrink-0 font-['Liberation_Sans',Arial,sans-serif]" id="chart"></svg>
      <div class="h-[6px] shrink-0 border-t border-white border-b border-b-[#6a6a6a]"><svg viewBox="0 0 30 5" class="w-[30px] h-[5px] block"><path d="M3 5h10l-5-5zM15 0h10l-5 5z"/></svg></div>
      <div class="grow border border-l-white border-t-white border-[#a8a8a8] mr-[2px] mb-[2px] flex flex-col pl-[14px] pt-[11px]">
        <div class="flex gap-[11px] items-start">
          <fieldset class="w-[384px] h-[162px] border border-[#a9a9ad] p-0 flex flex-col pl-[14px]">
            <legend class="ml-[-10px] px-[1px] h-[14px]"><span data-w="51">Curve Add</span></legend>
            <div class="flex mt-[3px] h-[31px] items-start shrink-0"><div class="w-[112px] pt-[2px] -ml-px"><span data-w="59">Curve Name</span></div><div class="w-[244px] h-[20px] border border-[#a9a9ad] bg-white pl-[1px] leading-[18px] ml-px"><span data-w="102">rect_fem_r,vas_int_r</span></div></div>
            <div id="fields"></div>
          </fieldset>
          <fieldset class="w-[256px] h-[162px] border border-[#a9a9ad] p-0 pl-[3px]">
            <legend class="ml-[1px] px-[1px] h-[14px]"><span data-w="54">Curves List</span></legend>
            <div class="mt-[3px] w-[239px] h-[96px] bg-white border border-[#82868f] flex">
              <svg viewBox="0 0 38 94" class="w-[38px] h-[94px] shrink-0"><path d="M1 2l5-1v14l-5-2z" fill="#e4c860" stroke="#c0a040" stroke-width=".6"/><path d="M6 1h6l2 2v11l-7 1z" fill="#f4e08c" stroke="#c0a040" stroke-width=".6"/><path d="M8.500 17v24M9 24.500h12M9 40.500h12" stroke="#888" stroke-dasharray="1 1" fill="none"/><circle cx="26.500" cy="24.500" r="4" fill="#555"/><circle cx="26.500" cy="40.500" r="4" fill="#555"/></svg>
              <div class="flex flex-col leading-[16px]"><span class="-ml-[19px] self-start" data-w="137">Fiber-Length vs. Knee Angle</span><span class="self-start" data-w="53">rect_fem_r</span><span class="self-start" data-w="45">vas_int_r</span></div>
            </div>
            <div class="mt-[18px] ml-[11px] flex gap-[8px] text-center leading-[19px]">
              <div class="w-[49px] h-[21px] border border-[#707070] rounded-[3px] bg-[linear-gradient(180deg,#f3f3f3,#ebebeb_48%,#dddddd_50%,#cfcfcf)]"><span data-w="19">Add</span></div>
              <div class="w-[61px] h-[21px] border border-[#b0b0b0] rounded-[3px] bg-[#f4f4f4] text-[#8a8a8a]"><span data-w="31">Delete</span></div>
              <div class="w-[91px] h-[21px] border-2 border-[#3c9cd0] rounded-[3px] bg-[linear-gradient(180deg,#eef3f6,#e2eaee_48%,#cddadf_50%,#bfd0d8)] leading-[15px]"><div class="h-full border border-dotted border-black"><span data-w="61">Properties...</span></div></div>
            </div>
          </fieldset>
        </div>
        <div class="mt-[9px] ml-[602px] w-[51px] h-[21px] border border-[#707070] rounded-[3px] bg-[linear-gradient(180deg,#f3f3f3,#ebebeb_48%,#dddddd_50%,#cfcfcf)] text-center leading-[19px]"><span data-w="22">Help</span></div>
      </div>
    </div>
    <div class="grow border-x border-x-[#8a98a4] border-r-[#c8d8e4] bg-[linear-gradient(180deg,#bcd6f2,#cfe0f2_85px,#9a9c9e_105px,#b4b4b4_126px,#0a1216_130px,#0a1216)]"></div>
  </div>
  <div class="h-[6px] shrink-0 border-b border-[#b8d4dc]"></div>
</section>
</main>

<script>
const el = id => document.getElementById(id);

// Paint palette
const colors = ['#000','#7f7f7f','#880015','#ed1c24','#ff7f27','#fff200','#22b14c','#00a2e8','#3f48cc','#a349a4',
  '#fff','#c3c3c3','#b97a57','#ffaec9','#ffc90e','#efe4b0','#b5e61d','#99d9ea','#7092be','#c8bfe7',
  ...Array(10).fill('transparent')];
el('palette').innerHTML = colors.map(c =>
  `<div class="h-[20px] border border-[#a0a0a0] p-px"><div class="size-full" style="background:${c}"></div></div>`).join('');

// Coordinate rows: name, label width, value, min, max, knob centre
const rows = [['pelvis_rotation',71,'0.000','-90','90',17],['pelvis_tx',43,'0.000','-5','5',17],['pelvis_ty',43,'0.000','-1','2',11],
['pelvis_tz',43,'0.000','-3','3',17],['hip_flexion_r',62,'45.000','-120','120',23],['hip_adduction_r',77,'0.000','-120','120',17],
['hip_rotation_r',68,'0.000','-120','120',17],['knee_angle_r',65,'0.000','-120','10',31],['ankle_angle_r',67,'0.000','-90','90',17],
['subtalar_angle_r',81,'0.000','-90','90',17],['mtp_angle_r',60,'0.000','-90','90',17],['hip_flexion_l',61,'0.000','-120','120',17],
['hip_adduction_l',76,'0.000','-120','120',17],['hip_rotation_l',67,'0.000','-120','120',17],['knee_angle_l',64,'0.000','-120','10',31],
['ankle_angle_l',66,'0.000','-60','60',17],['subtalar_angle_l',80,'0.000','-90','90',17],['mtp_angle_l',59,'0.000','-60','60',17]];
el('rows').innerHTML = rows.map(([n,w,v,a,b,k]) => `<div class="h-[25px] flex items-start pt-[2px]">
  <div class="w-[99px] text-right pt-[3px]"><span data-w="${w}">${n}</span></div>
  <div class="ml-[5px] w-[55px] h-[20px] border border-[#a9a9ad] bg-white text-right pr-[4px] leading-[18px]"><span data-w="${v.length>5?34:28}">${v}</span></div>
  <svg viewBox="0 0 36 18" class="ml-[4px] w-[36px] h-[18px]"><path d="M1 8.500v-2q0-1.500 2.500-1.500t2.500 1.500v3" fill="none" stroke="#1c3a68" stroke-width="1.800"/><path d="M4.500 8.500h8.500v6.500h-8.500z" fill="#28508c"/><path d="M8.500 10v3" stroke="#dfe8f4" stroke-width="1.200"/><path d="M18 10.500h15M22.500 3.500q-2 1-2 4v4q0 3-1.500 5M29.500 4.500h1.500l1.500 6" fill="none" stroke="#2c508c" stroke-width="1.900"/></svg>
  <div class="w-[36px] text-right text-[#8a8a8a] pt-[5px]"><span data-w="${a.length>3?22:a.length===3?16:10}">${a}</span></div>
  <svg viewBox="0 0 38 20" class="ml-[11px] w-[38px] h-[20px]"><path d="M0 11.500h34" stroke="#b4b4b4"/><path d="M0 12.500h34" stroke="#fff"/><circle cx="${k+.5}" cy="12" r="5.500" fill="#2c508c" stroke="#1c2c44" stroke-width=".8"/><circle cx="${k-1}" cy="10" r="2" fill="#6c90c4"/></svg>
  <div class="ml-[8px] w-[31px] text-[#8a8a8a] pt-[5px]"><span data-w="${b.length*6-(b.length>2?1:0)}">${b}</span></div>
  <div class="w-[49px] h-[20px] border border-[#a9a9ad] bg-white pl-[2px] leading-[18px]"><span data-w="28">0.000</span></div>
</div>`).join('');

// Plotter form rows
el('fields').innerHTML = [['Y-Quantity...',64,'fiber-length',56],['Muscles...',49,'rect_fem_r, vas_int_r',105],['X-Quantity...',64,'knee_angle_r',65],['Advanced...',60,'',0]].map(([b,w,t,tw]) =>
  `<div class="flex h-[29px] gap-[7px] text-center leading-[19px]"><div class="w-[105px] h-[21px] border border-[#707070] rounded-[3px] bg-[linear-gradient(180deg,#f3f3f3,#ebebeb_48%,#dddddd_50%,#cfcfcf)]"><span data-w="${w}">${b}</span></div><div class="w-[244px] h-[20px] border border-[#a9a9ad] text-left pl-[1px] leading-[18px]">${t?`<span data-w="${tw}">${t}</span>`:''}</div></div>`).join('');

// View tool icons
const cube = (y,f) => `<g transform="translate(1326 ${y})"><path d="M.5 1h10l3 3v9.500h-10l-3-3z" fill="#fff" stroke="#34588c" stroke-width="1.200"/><path d="M3.500 4h10M3.500 4v9.500M.5 1l3 3M10.500 1v9h-10M10.500 10l3 3.500" fill="none" stroke="#34588c" stroke-width=".9"/>${f}</g>`;
el('tools').innerHTML = `<path d="M1333 220h7v13z" fill="#3c64a4"/><path d="M1326 220l12 12l-5 1z" fill="#b8c4d4"/><path d="M1334 248.500h-7" stroke="#2838e0" stroke-width="2"/><path d="M1330 245.500v6l-4-3z" fill="#2838e0"/><path d="M1334.500 249v-6" stroke="#10e020" stroke-width="2"/><path d="M1331 244h7l-3.500-4z" fill="#10e020"/><path d="M1335 249l2.500 2.500" stroke="#f01010" stroke-width="1.600"/><circle cx="1338" cy="251" r="2" fill="#f01010"/>`
 + cube(260,'<path d="M4.500 5h9v8.500h-9z" fill="#f00"/>') + cube(280,'<path d="M2 2h7.500v8h-7.500z" fill="#ff80a8"/>')
 + cube(300,'<path d="M2 1.500h8l2.500 2.500h-8z" fill="#0f0"/>') + cube(320,'<path d="M2 10.500h8l2.500 2.500h-8z" fill="#80f080"/>')
 + cube(340,'<path d="M.8 2l2.500 2.500v8l-2.500-2.500z" fill="#00f"/>') + cube(360,'<path d="M11 2.500l2.200 2v7.500l-2.200-2z" fill="#8080ff"/>')
 + `<path d="M1326 384h4l1.500-3h3l1.500 3h3v9h-13z" fill="#5c80b4"/><circle cx="1333" cy="388.500" r="3" fill="#fff"/>
 <g fill="#4c70a8"><circle cx="1329" cy="402" r="2.500"/><circle cx="1334" cy="402" r="2.500"/><path d="M1328 406h8v7h-8zM1336 409l4-2.500v6z"/><path d="M1330 421h8v6h-8zM1338 423l2-1v5z"/></g><path d="M1325 419h2v12h14" fill="none" stroke="#7090c0" stroke-width="1.400"/><circle cx="1329" cy="433" r="1.600" fill="#6c90c8"/><circle cx="1337" cy="433" r="1.600" fill="#6c90c8"/>
 <path d="M1323 437h20v20h-20z" fill="#f0f0f0"/><path d="M1325 450h3l4-11h2l2 9q0 2 3 2M1329 446l6-3" fill="none" stroke="#000" stroke-width="1.200"/>`;

// Chart
const xs = [...Array(14)].map((_,i) => 425 + i*36.85);
const red = [174.5,179.5,185,191.5,198,206.7,216,226,237,250,262.5,274.5,286.5,296.5];
const blue = [249.5,255,260.5,267,275,283,292.5,302,311.5,323,334,344.5,355,365.5];
const ys = [166,201.7,237.5,273.4,309.4,345.3];
const line = (a,c) => `<polyline fill="none" stroke="${c}" stroke-width="2" points="${a.map((y,i)=>xs[i]+','+y).join(' ')}"/>`;
let s = `<text x="510" y="144" font-family="Liberation Serif,serif" font-weight="bold" font-size="25" fill="#00cccc" textLength="348">Fiber-Length vs. Knee Angle</text>
<rect x="401.500" y="165.500" width="527" height="210" fill="#fff" stroke="#b0b0b0"/><path d="M401.500 165v210.500h527" fill="none" stroke="#808080"/>`;
ys.forEach((y,i) => { const p = Math.round(y)+.5;
  s += `<path d="M402 ${p}h526" stroke="#dcdcdc" stroke-dasharray="2 2"/><path d="M399 ${p}h2" stroke="#808080"/><text x="367.500" y="${y+4}" font-size="9.500" textLength="27" lengthAdjust="spacingAndGlyphs">${(0.175-i*.025).toFixed(3)}</text>`; });
xs.forEach((x,i) => { const p = Math.floor(x)+.5, t = String(-120+i*10), w = t.length*6 - (t[0]==='-'?3:0);
  s += `<path d="M${p} 166v209" stroke="#dcdcdc" stroke-dasharray="2 2"/><path d="M${p} 376v2" stroke="#808080"/><text x="${x-w/2}" y="389" font-size="9.500" textLength="${w}" lengthAdjust="spacingAndGlyphs">${t}</text>`; });
s += line(red,'#c00000') + line(blue,'#0000c8');
s += `<text x="627" y="407" font-size="12" textLength="76">knee_angle_r</text><text transform="translate(360 301) rotate(-90)" font-size="12" textLength="62">fiber-length</text>
<rect x="937.500" y="268.500" width="84" height="41" fill="#fff" stroke="#000"/><path d="M941 279.500h16" stroke="#c00000" stroke-width="2"/><path d="M941 298.500h16" stroke="#0000c8" stroke-width="2"/><text x="959" y="284" font-size="12" textLength="59">rect_fem_r</text><text x="959" y="303" font-size="12" textLength="50">vas_int_r</text>`;
el('chart').innerHTML = s;

// Scale each label to its declared width, again whenever its own font metrics change
const fit = e => {
  const nat = e.offsetWidth, w = +e.dataset.w, p = getComputedStyle(e.parentElement);
  if (!nat) return;
  const centred = p.display === 'flex' && p.flexDirection === 'column' && !e.classList.contains('self-start');
  e.style.transformOrigin = centred ? '50% 50%' : '0 50%';
  e.style.transform = `scaleX(${w / nat})`;
  e.style.marginRight = centred ? '' : (w - nat) + 'px';
};
const ro = new ResizeObserver(list => list.forEach(r => fit(r.target)));
const fitAll = () => document.querySelectorAll('[data-w]').forEach(fit);
document.querySelectorAll('[data-w]').forEach(e => {
  e.style.display = 'inline-block';
  e.style.flexShrink = 0;
  ro.observe(e);
});
addEventListener('load', () => { fitAll(); requestAnimationFrame(fitAll); });
</script>
</body>
</html>
